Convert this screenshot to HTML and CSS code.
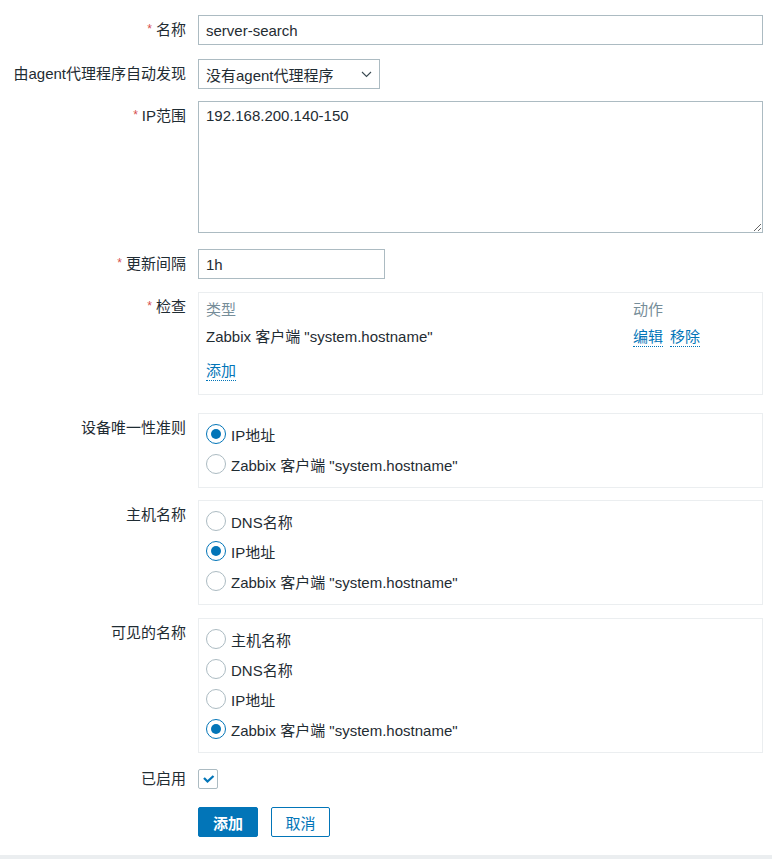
FILE: index.html
```html
<!DOCTYPE html>
<html lang="zh">
<head>
<meta charset="utf-8">
<link rel="stylesheet" href="styles.css">
</head>
<body>
<div class="page">
  <form class="form">
    <div class="row r-name">
      <label class="lbl"><span class="req">*</span>名称</label>
      <div class="field"><input class="txt wide" type="text" value="server-search"></div>
    </div>
    <div class="row r-proxy">
      <label class="lbl">由agent代理程序自动发现</label>
      <div class="field">
        <div class="select"><span>没有agent代理程序</span>
          <svg class="chev" width="11" height="7" viewBox="0 0 11 7"><path d="M1 1 L5.5 5.5 L10 1" fill="none" stroke="#3a4a52" stroke-width="1.1"/></svg>
        </div>
      </div>
    </div>
    <div class="row r-ip">
      <label class="lbl"><span class="req">*</span>IP范围</label>
      <div class="field"><textarea class="area">192.168.200.140-150</textarea></div>
    </div>
    <div class="row r-delay">
      <label class="lbl"><span class="req">*</span>更新间隔</label>
      <div class="field"><input class="txt short" type="text" value="1h"></div>
    </div>
    <div class="row r-checks">
      <label class="lbl"><span class="req">*</span>检查</label>
      <div class="field">
        <div class="box checks">
          <div class="crow head"><span class="c1">类型</span><span class="c2">动作</span></div>
          <div class="crow item"><span class="c1">Zabbix 客户端 "system.hostname"</span><span class="c2"><a class="lnk">编辑</a><a class="lnk">移除</a></span></div>
          <div class="crow add"><a class="lnk">添加</a></div>
        </div>
      </div>
    </div>
    <div class="row r-uniq">
      <label class="lbl">设备唯一性准则</label>
      <div class="field">
        <div class="box radios">
          <div class="ropt"><span class="radio on"></span>IP地址</div>
          <div class="ropt"><span class="radio"></span>Zabbix 客户端 "system.hostname"</div>
        </div>
      </div>
    </div>
    <div class="row r-host">
      <label class="lbl">主机名称</label>
      <div class="field">
        <div class="box radios">
          <div class="ropt"><span class="radio"></span>DNS名称</div>
          <div class="ropt"><span class="radio on"></span>IP地址</div>
          <div class="ropt"><span class="radio"></span>Zabbix 客户端 "system.hostname"</div>
        </div>
      </div>
    </div>
    <div class="row r-vis">
      <label class="lbl">可见的名称</label>
      <div class="field">
        <div class="box radios">
          <div class="ropt"><span class="radio"></span>主机名称</div>
          <div class="ropt"><span class="radio"></span>DNS名称</div>
          <div class="ropt"><span class="radio"></span>IP地址</div>
          <div class="ropt"><span class="radio on"></span>Zabbix 客户端 "system.hostname"</div>
        </div>
      </div>
    </div>
    <div class="row r-enabled">
      <label class="lbl lbl-short">已启用</label>
      <div class="field">
        <span class="check"><svg width="13" height="10" viewBox="0 0 13 10"><path d="M2 4 L5.5 7.5 L11.5 2" fill="none" stroke="#0275b8" stroke-width="2.3"/></svg></span>
      </div>
    </div>
    <div class="row r-btns">
      <div class="lbl"></div>
      <div class="field btns">
        <button type="button" class="btn primary">添加</button>
        <button type="button" class="btn alt">取消</button>
      </div>
    </div>
  </form>
  <div class="footer"></div>
</div>
</body>
</html>
```

FILE: styles.css
```css
* { box-sizing: border-box; }
html, body { margin: 0; padding: 0; background: #fff; }
body {
  font-family: "Liberation Sans", Arial, "Noto Sans CJK SC", sans-serif;
  font-size: 15px;
  color: #1f2c33;
}
.page { width: 772px; height: 859px; display: flex; flex-direction: column; }
.form { flex: 1; padding-top: 15px; }
.footer { height: 4px; background: #ebeef0; }

.row { display: flex; align-items: flex-start; }
.lbl {
  width: 186px;
  flex: none;
  text-align: right;
  line-height: 30px;
  white-space: nowrap;
  color: #1f2c33;
}
.req { color: #d64e4e; font-size: 12px; margin-right: 4px; position: relative; top: -2px; }
.field { margin-left: 12px; flex: none; width: 565px; }

.r-name { margin-bottom: 13px; }
.r-proxy { margin-bottom: 12px; }
.r-ip { margin-bottom: 16px; }
.r-delay { margin-bottom: 12px; }
.r-checks { margin-bottom: 18px; }
.r-uniq { margin-bottom: 12px; }
.r-host { margin-bottom: 13px; }
.r-vis { margin-bottom: 16px; }
.r-enabled { margin-bottom: 18px; }
.r-enabled .lbl { line-height: 20px; }

.txt, .area, .select {
  font-family: inherit;
  font-size: 15px;
  color: #1f2c33;
  border: 1px solid #acbbc2;
  background: #fff;
  border-radius: 0;
  outline: none;
}
.txt { height: 30px; padding: 0 7px; display: block; }
.wide { width: 565px; }
.short { width: 187px; }
.area {
  display: block;
  width: 565px;
  height: 132px;
  padding: 5px 7px;
  resize: both;
  line-height: 18px;
}
.select {
  width: 182px;
  height: 30px;
  padding: 0 7px 0 7px;
  display: flex;
  align-items: center;
  justify-content: space-between;
}

.box { border: 1px solid #ebeef0; width: 565px; }
.checks { padding: 7px 0 0 7px; height: 103px; }
.crow { display: flex; line-height: 20px; }
.crow .c1 { width: 427px; }
.head { color: #768d99; }
.item { margin-top: 7px; }
.add { margin-top: 15px; }
.lnk {
  color: #0275b8;
  text-decoration: none;
  border-bottom: 1px dotted #0275b8;
  cursor: pointer;
  line-height: 18px;
  display: inline-block;
}
.c2 .lnk + .lnk { margin-left: 7px; }

.radios { padding: 5px 7px 8px; }
.ropt { display: flex; align-items: center; height: 30px; }
.radio {
  width: 20px;
  height: 20px;
  border: 1px solid #acbbc2;
  border-radius: 50%;
  margin-right: 5px;
  flex: none;
  position: relative;
  background: #fff;
}
.radio.on { border-color: #0275b8; }
.radio.on::after {
  content: "";
  position: absolute;
  left: 4px; top: 4px;
  width: 10px; height: 10px;
  border-radius: 50%;
  background: #0275b8;
}

.check {
  width: 20px; height: 20px;
  border: 1px solid #acbbc2;
  border-radius: 2px;
  display: flex;
  align-items: center;
  justify-content: center;
}

.btns { display: flex; gap: 13px; }
.btn {
  font-family: inherit;
  font-size: 15px;
  height: 30px;
  padding: 0;
  border-radius: 2px;
  cursor: pointer;
}
.primary { background: #0275b8; color: #fff; border: 1px solid #0275b8; width: 60px; font-weight: bold; }
.alt { background: #fff; color: #0275b8; border: 1px solid #0275b8; width: 59px; }
```
